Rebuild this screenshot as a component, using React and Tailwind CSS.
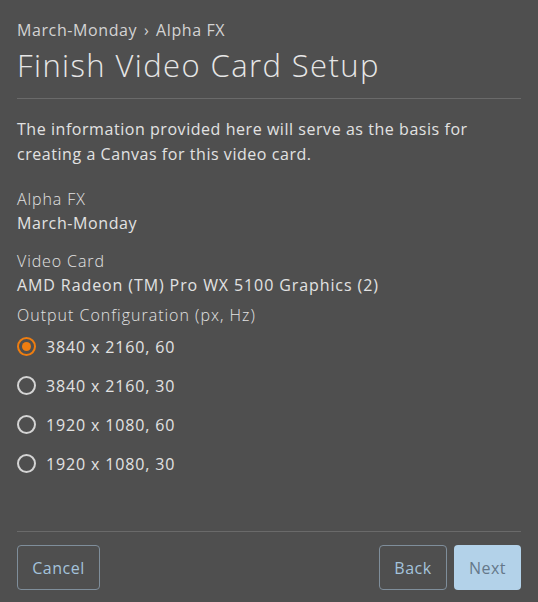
import React, { useState } from "react";

const outputs = [
  "3840 x 2160, 60",
  "3840 x 2160, 30",
  "1920 x 1080, 60",
  "1920 x 1080, 30",
];

function Radio({ checked }) {
  return (
    <span
      className={`flex h-[19px] w-[19px] items-center justify-center rounded-full border-2 ${
        checked ? "border-[#ee7d10]" : "border-[#d4d4d4]"
      }`}
    >
      {checked && <span className="h-[9px] w-[9px] rounded-full bg-[#ee7d10]" />}
    </span>
  );
}

export default function App() {
  const [selected, setSelected] = useState(0);

  return (
    <div className="flex min-h-[602px] w-[538px] flex-col bg-[#4f4f4f] px-[17px] font-['Open_Sans',sans-serif] text-[#e2e2e2]">
      <div className="pt-[19px] text-[16px] font-medium leading-[22px] tracking-[0.6px] text-[#d3d3d3]">
        March-Monday <span className="mx-[2px]">›</span> Alpha FX
      </div>
      <h1 className="mt-[5px] text-[31px] font-light leading-[38px] tracking-[1.4px] text-[#e6e6e6]">
        Finish Video Card Setup
      </h1>
      <div className="mt-[14px] border-t border-[#6a6a6a]" />

      <p className="mt-[18px] text-[16px] leading-[25px] tracking-[0.55px]">
        The information provided here will serve as the basis for creating a
        Canvas for this video card.
      </p>

      <div className="mt-[20px] text-[16px] leading-[24px] tracking-[0.6px]">
        <div className="font-light tracking-[0.9px]">Alpha FX</div>
        <div>March-Monday</div>
      </div>

      <div className="mt-[14px] text-[16px] leading-[24px] tracking-[0.9px]">
        <div className="font-light">Video Card</div>
        <div>AMD Radeon (TM) Pro WX 5100 Graphics (2)</div>
      </div>

      <div className="mt-[6px] text-[16px] font-light leading-[24px] tracking-[1px]">
        Output Configuration (px, Hz)
      </div>

      <div className="flex flex-col">
        {outputs.map((o, i) => (
          <label
            key={o}
            className="flex h-[39px] cursor-pointer items-center gap-[10px] text-[16px] tracking-[0.85px]"
            onClick={() => setSelected(i)}
          >
            <Radio checked={selected === i} />
            <span>{o}</span>
          </label>
        ))}
      </div>

      <div className="mt-auto border-t border-[#6a6a6a]" />
      <div className="flex items-center justify-between pb-[12px] pt-[13px]">
        <button
          type="button"
          className="h-[45px] w-[83px] rounded-[4px] border border-[#7f8e9b] text-[16px] tracking-[0.5px] text-[#a4c3dc]"
        >
          Cancel
        </button>
        <div className="flex gap-[7px]">
          <button
            type="button"
            className="h-[45px] w-[68px] rounded-[4px] border border-[#7f8e9b] text-[16px] tracking-[0.5px] text-[#a4c3dc]"
          >
            Back
          </button>
          <button
            type="button"
            className="h-[45px] w-[67px] rounded-[4px] bg-[#b3d2e9] text-[16px] tracking-[0.5px] text-[#65788a]"
          >
            Next
          </button>
        </div>
      </div>
    </div>
  );
}
